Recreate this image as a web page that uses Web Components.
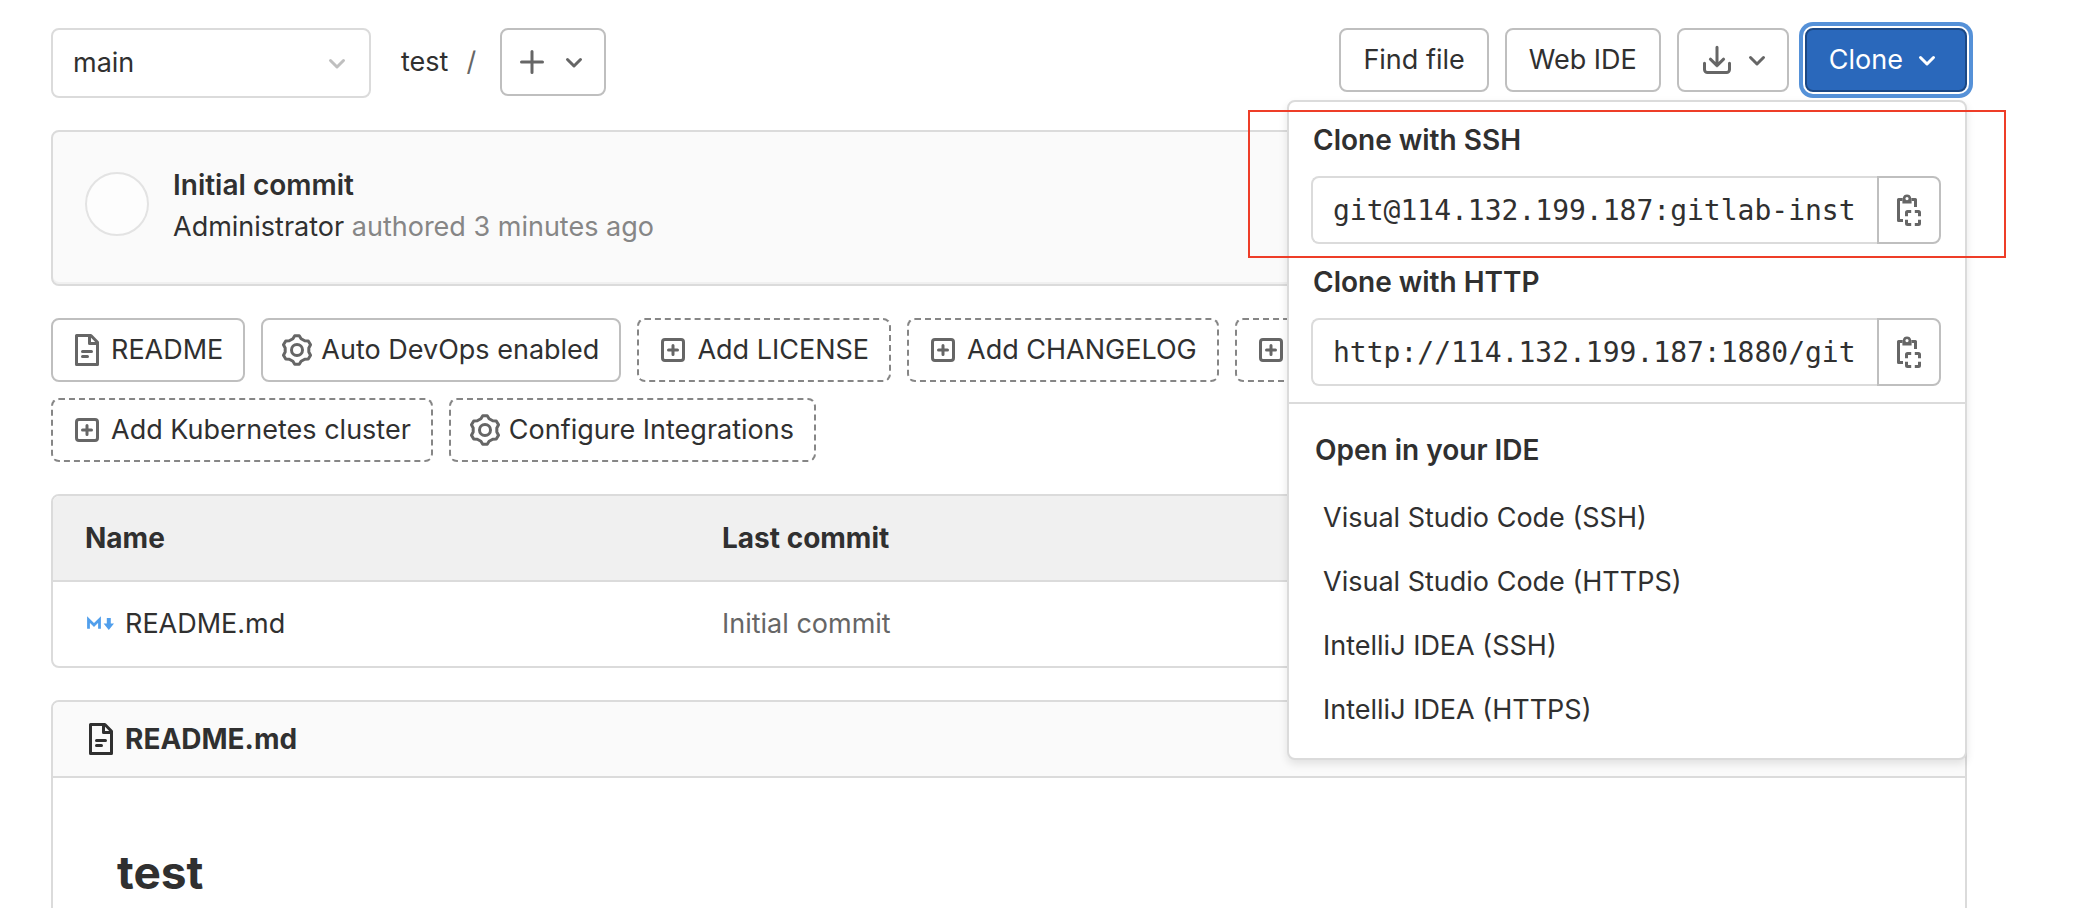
<!DOCTYPE html>
<html lang="en">
<head>
<meta charset="utf-8">
<title>test · GitLab</title>
<style>
html { scrollbar-width: none; }
body { margin: 0; background: #fff; color: #303030; font: 27px/40px Inter, "Noto Sans", sans-serif; }
</style>
</head>
<body>
<repo-page></repo-page>
<script>
const define = (name, html, setup) => {
  const tpl = document.createElement('template');
  tpl.innerHTML = html;
  customElements.define(name, class extends HTMLElement {
    constructor() {
      super();
      this.attachShadow({ mode: 'open' }).append(tpl.content.cloneNode(true));
    }
    connectedCallback() { if (setup) setup(this, this.shadowRoot); }
  });
};

/* 16-unit icon set */
const ICONS = {
  chevron: '<path fill="none" stroke="currentColor" stroke-width="1.5" stroke-linecap="round" stroke-linejoin="round" d="M4.75 6.75 8 10l3.25-3.25"/>',
  plus: '<path fill="none" stroke="currentColor" stroke-width="1.5" stroke-linecap="round" d="M8 2.75v10.5M2.75 8h10.5"/>',
  download: '<path fill="none" stroke="currentColor" stroke-width="1.5" stroke-linecap="round" stroke-linejoin="round" d="M8 1.600v9.200M4.700 7.600 8 10.800l3.300-3.200M1.750 9.600v3.150a1.500 1.500 0 0 0 1.500 1.500h9.500a1.500 1.500 0 0 0 1.500-1.500V9.600"/>',
  add: '<rect x="2.75" y="2.75" width="10.5" height="10.5" rx="1.25" fill="none" stroke="currentColor" stroke-width="1.5"/><path fill="none" stroke="currentColor" stroke-width="1.5" stroke-linecap="round" d="M8 5.75v4.5M5.75 8h4.5"/>',
  doc: '<path fill="none" stroke="currentColor" stroke-width="1.5" stroke-linejoin="round" d="M2.75.75h7.2l3.3 3.4v11.1H2.75zM9.25.75v4h4"/><path fill="none" stroke="currentColor" stroke-width="1.5" stroke-linecap="round" d="M5.75 8.75h4.5M5.75 11.25h2.5"/>',
  gear: '<path fill="none" stroke="currentColor" stroke-width="1.5" stroke-linejoin="round" d="M6.87.84H9.130L10.050 2.360 11.860 3.400 13.630 3.440 14.770 5.400 13.910 6.960V9.040L14.770 10.600 13.630 12.560 11.860 12.600 10.050 13.640 9.130 15.160H6.870L5.950 13.640 4.140 12.600 2.370 12.560 1.230 10.600 2.090 9.040V6.960L1.230 5.400 2.370 3.440 4.140 3.400 5.950 2.360z"/><circle cx="8" cy="8" r="2.75" fill="none" stroke="currentColor" stroke-width="1.5"/>',
  copy: '<path fill="none" stroke="currentColor" stroke-width="1.5" stroke-linejoin="round" d="M5 13.250H2.750V2.700h2M9.300 2.700h1.950V6.500"/><path fill="currentColor" fill-rule="evenodd" d="M4.700 4.700V2H4.900a2.150 2.150 0 0 1 4.200 0h.2V4.700zM7 1.500a.8.8 0 1 0 0 1.600.8.8 0 0 0 0-1.600z"/><path fill="none" stroke="currentColor" stroke-width="1.5" d="M6.750 11.100V9.250a.5.5 0 0 1 .5-.5H9.100M10.900 8.750h1.850a.5.5 0 0 1 .5.5V11.100M13.250 12.900v1.850a.5.5 0 0 1-.5.5H10.900M9.100 15.250H7.250a.5.5 0 0 1-.5-.5V12.900"/>',
  markdown: '<path fill="none" stroke="currentColor" stroke-width="1.400" d="M1.750 10.400V5.800l2.750 2.700 2.750-2.700v4.600"/><path fill="currentColor" d="M10.900 5h2v2.800h1.600L11.900 11 9.300 7.800h1.600z"/>'
};
define('gl-icon', `<style>
  :host { display: block; flex: none; width: 32px; height: 32px; }
  svg { display: block; width: 100%; height: 100%; }
</style><svg viewBox="0 0 16 16" aria-hidden="true"></svg>`, (el, root) => {
  root.querySelector('svg').innerHTML = ICONS[el.getAttribute('name')];
});

define('gl-button', `<style>
  :host { display: block; }
  button { box-sizing: border-box; height: 64px; display: flex; align-items: center; gap: 8px; margin: 0; padding: 0 22px;
    border: 2px solid #bfbfbf; border-radius: 8px; background: #fff; color: inherit; font: inherit; white-space: nowrap; }
  ::slotted(gl-icon) { color: #666; }
  :host([menu]) button { padding-right: 14px; }
  :host([tall]) button { height: 68px; padding: 0 14px; gap: 10px; }
  :host([primary]) button { background: #2a68bb; border-color: #1b4885; color: #fff;
    box-shadow: 0 0 0 2px #fff, 0 0 0 6px #5591d8; }
  :host([primary]) ::slotted(gl-icon) { color: #fff; }
</style><button type="button"><slot></slot></button>`, (el, root) => {
  const label = el.getAttribute('label');
  if (label) root.querySelector('button').setAttribute('aria-label', label);
});

define('stat-link', `<style>
  :host { display: block; }
  a { box-sizing: border-box; height: 64px; display: flex; align-items: center; gap: 8px; padding: 0 20px 0 18px;
    border: 2px solid #bfbfbf; border-radius: 8px; color: inherit; text-decoration: none; white-space: nowrap; }
  :host([dashed]) a { border: 2px dashed #868686; }
  gl-icon { color: #666; }
</style><a href="#"><gl-icon name="add"></gl-icon><slot></slot></a>`, (el, root) => {
  const icon = document.createElement('gl-icon');
  icon.setAttribute('name', el.getAttribute('icon'));
  root.querySelector('gl-icon').replaceWith(icon);
});

define('branch-select', `<style>
  :host { display: grid; align-items: center; width: 320px; height: 70px; }
  select { grid-area: 1 / 1; box-sizing: border-box; width: 100%; height: 70px; padding: 0 20px; appearance: none;
    border: 2px solid #dbdbdb; border-radius: 8px; background: #fff; color: inherit; font: inherit; }
  gl-icon { grid-area: 1 / 1; justify-self: end; margin-right: 18px; color: #bfbfbf; pointer-events: none; }
</style><select aria-label="Branch"><option>main</option></select><gl-icon name="chevron"></gl-icon>`);

define('clone-field', `<style>
  :host { display: block; }
  label { display: block; padding: 0 2px; font-size: 28px; font-weight: 600; }
  .group { display: flex; margin-top: 16px; }
  input { box-sizing: border-box; flex: 1; min-width: 0; height: 68px; margin: 0; padding: 0 20px;
    border: 2px solid #dbdbdb; border-right: 0; border-radius: 8px 0 0 8px; background: #fff; color: inherit;
    font: 28px/40px "DejaVu Sans Mono", monospace; }
  button { box-sizing: border-box; width: 64px; height: 68px; padding: 0 14px; border: 2px solid #bfbfbf;
    border-radius: 0 8px 8px 0; background: #fff; color: #666; }
</style><label for="url"><slot></slot></label>
<div class="group"><input id="url" type="text" readonly><button type="button" aria-label="Copy URL"><gl-icon name="copy"></gl-icon></button></div>`,
(el, root) => { root.querySelector('input').value = el.getAttribute('value'); });

define('clone-menu', `<style>
  :host { display: block; box-sizing: border-box; border: 2px solid #dbdbdb; border-radius: 8px; background: #fff;
    box-shadow: 0 4px 8px rgba(0,0,0,.1); }
  .urls { display: grid; gap: 18px; padding: 18px 24px 16px 22px; border-bottom: 2px solid #dbdbdb; }
  .ide { padding: 26px 26px 16px; }
  h2 { margin: 0 0 16px; font-size: 28px; line-height: 40px; font-weight: 600; }
  a { display: block; padding: 12px 8px; color: inherit; text-decoration: none; }
</style>
<div class="urls">
  <clone-field value="git@114.132.199.187:gitlab-inst">Clone with SSH</clone-field>
  <clone-field value="http://114.132.199.187:1880/git">Clone with HTTP</clone-field>
</div>
<div class="ide">
  <h2>Open in your IDE</h2>
  <a href="#">Visual Studio Code (SSH)</a>
  <a href="#">Visual Studio Code (HTTPS)</a>
  <a href="#">IntelliJ IDEA (SSH)</a>
  <a href="#">IntelliJ IDEA (HTTPS)</a>
</div>`);

define('repo-toolbar', `<style>
  :host { display: flex; justify-content: space-between; align-items: flex-start; height: 70px; }
  nav { display: flex; }
  .path { display: flex; gap: 18px; margin: 14px 24px 0 30px; }
  .path a { color: inherit; text-decoration: none; }
  .path span { color: #666; }
  .actions { display: flex; gap: 16px; }
  .clone { position: relative; }
  clone-menu { position: absolute; z-index: 2; top: 72px; right: 0; width: 680px; }
  .mark { position: absolute; z-index: 3; box-sizing: border-box; top: 82px; right: -39px; width: 758px; height: 148px;
    border: 2px solid #ee3d28; pointer-events: none; }
</style>
<nav>
  <branch-select></branch-select>
  <div class="path"><a href="#">test</a><span>/</span></div>
  <gl-button tall label="Add to tree"><gl-icon name="plus"></gl-icon><gl-icon name="chevron"></gl-icon></gl-button>
</nav>
<div class="actions">
  <gl-button>Find file</gl-button>
  <gl-button>Web IDE</gl-button>
  <gl-button menu label="Download"><gl-icon name="download"></gl-icon><gl-icon name="chevron"></gl-icon></gl-button>
  <div class="clone">
    <gl-button primary>Clone <gl-icon name="chevron"></gl-icon></gl-button>
    <clone-menu></clone-menu>
    <div class="mark"></div>
  </div>
</div>`);

define('commit-card', `<style>
  :host { display: flex; box-sizing: border-box; gap: 24px; padding: 32px 32px 36px; border: 2px solid #dbdbdb;
    border-radius: 8px; background: #fafafa; box-shadow: inset 0 -2px #f0f0f0; }
  .avatar { box-sizing: border-box; width: 64px; height: 64px; margin-top: 8px; border: 2px solid #e3e3e3; border-radius: 50%; background: #fdfdfd; }
  a { display: block; font-size: 28px; line-height: 42px; color: inherit; font-weight: 600; text-decoration: none; }
  p { margin: 0; line-height: 42px; color: #868686; }
  p a { display: inline; font-size: 27px; font-weight: 400; color: #303030; }
</style>
<div class="avatar"></div>
<div><a href="#">Initial commit</a><p><a href="#">Administrator</a> authored 3 minutes ago</p></div>`);

define('repo-stats', `<style>
  :host { display: flex; flex-wrap: wrap; gap: 16px; }
</style>
<stat-link icon="doc">README</stat-link>
<stat-link icon="gear">Auto DevOps enabled</stat-link>
<stat-link dashed icon="add">Add LICENSE</stat-link>
<stat-link dashed icon="add">Add CHANGELOG</stat-link>
<stat-link dashed icon="add">Add CONTRIBUTING</stat-link>
<stat-link dashed icon="add">Add Kubernetes cluster</stat-link>
<stat-link dashed icon="gear">Configure Integrations</stat-link>`);

define('file-table', `<style>
  :host { display: block; border: 2px solid #dbdbdb; border-radius: 8px; overflow: hidden; }
  table { width: 100%; border-spacing: 0; table-layout: fixed; }
  th, td { box-sizing: border-box; height: 84px; padding: 0 32px; text-align: left; font-weight: 400; }
  th { height: 86px; background: #f0f0f0; border-bottom: 2px solid #dbdbdb; font-size: 28px; font-weight: 700; }
  th:first-child { width: 637px; }
  td a { display: flex; align-items: center; gap: 8px; color: inherit; text-decoration: none; }
  td:last-child { color: #666; }
  gl-icon { color: #519fec; }
</style>
<table>
  <thead><tr><th scope="col">Name</th><th scope="col">Last commit</th></tr></thead>
  <tbody><tr><td><a href="#"><gl-icon name="markdown"></gl-icon>README.md</a></td><td><a href="#">Initial commit</a></td></tr></tbody>
</table>`);

define('readme-panel', `<style>
  :host { display: block; border: 2px solid #dbdbdb; border-radius: 8px; }
  header { display: flex; align-items: center; gap: 8px; height: 74px; padding: 0 32px; background: #fafafa;
    border-bottom: 2px solid #dbdbdb; border-radius: 6px 6px 0 0; font-size: 28px; font-weight: 700; }
  .body { padding: 64px; }
  h1 { margin: 0; font-size: 46px; line-height: 60px; font-weight: 700; }
</style>
<header><gl-icon name="doc"></gl-icon>README.md</header>
<div class="body"><h1><slot></slot></h1></div>`);

define('repo-page', `<style>
  :host { display: flex; flex-direction: column; gap: 32px; padding: 28px 113px 32px 51px; }
</style>
<repo-toolbar></repo-toolbar>
<commit-card></commit-card>
<repo-stats></repo-stats>
<file-table></file-table>
<readme-panel>test</readme-panel>`);
</script>
</body>
</html>
